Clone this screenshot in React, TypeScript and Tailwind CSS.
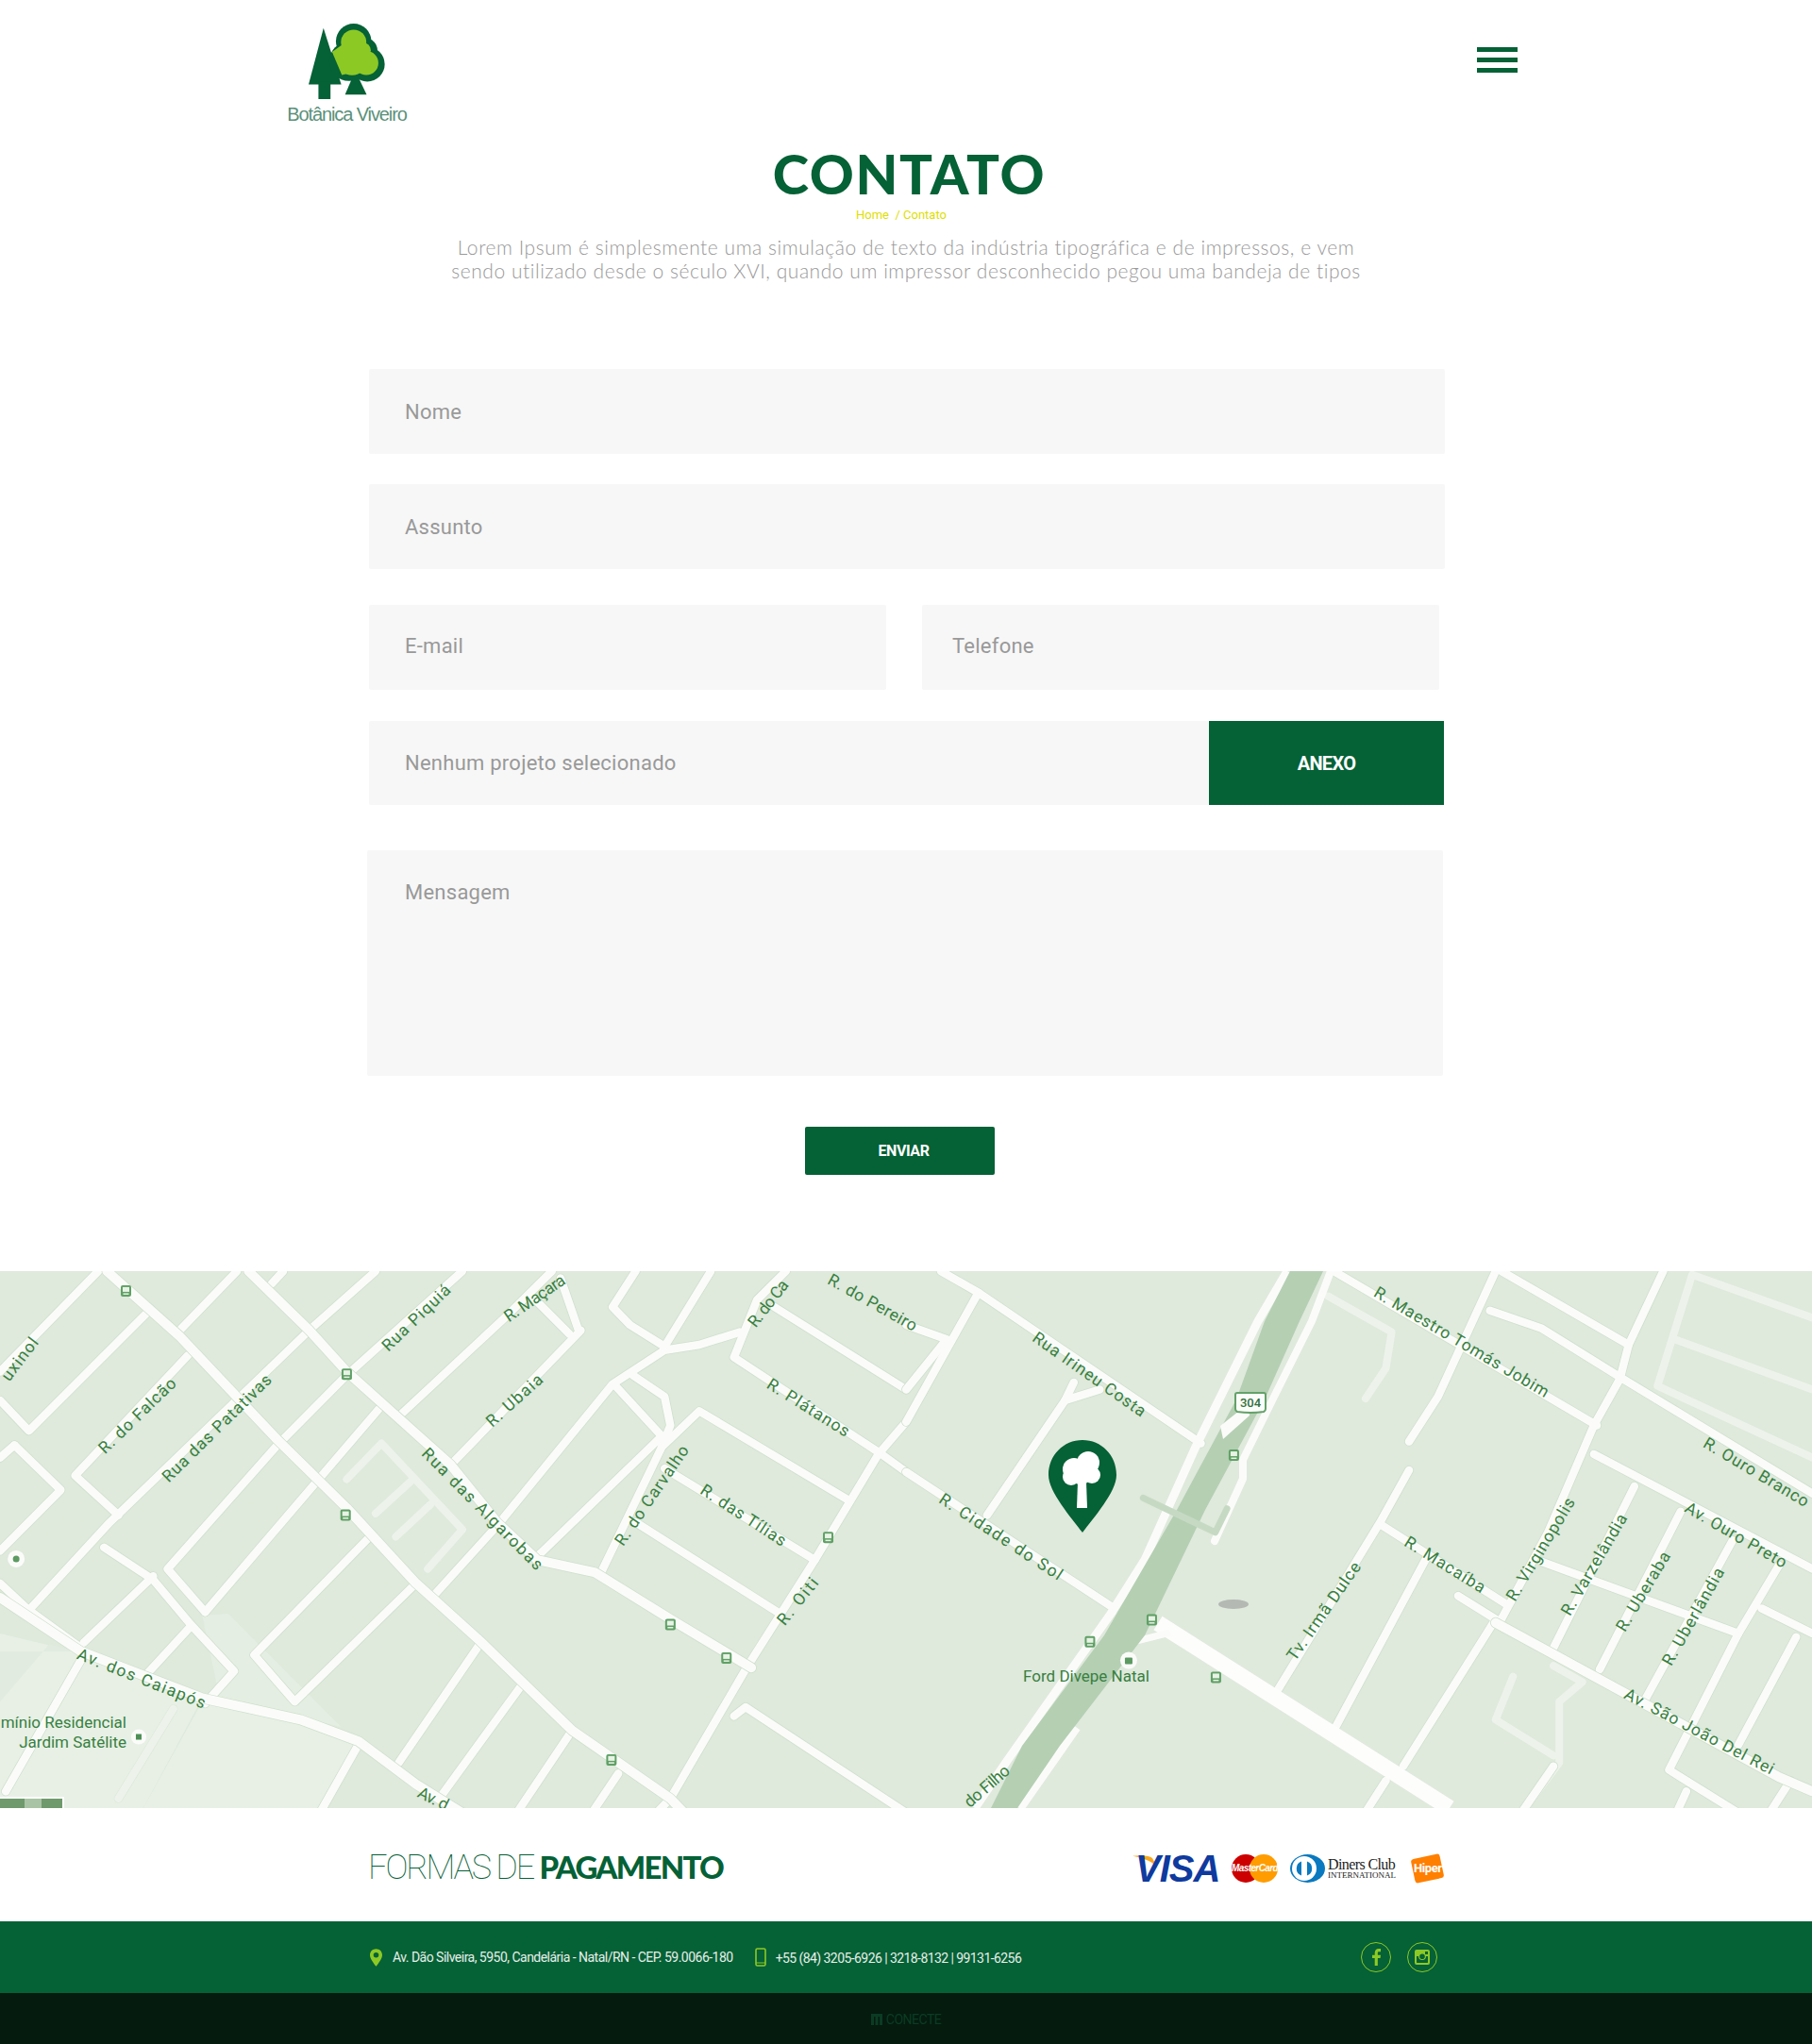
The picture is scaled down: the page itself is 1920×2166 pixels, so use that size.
import type { ReactNode } from "react"

type Pt = [number, number]

// map data is traced in a 1568x1550 working space per half, toMap brings it to real map pixels
const toMap = ([x, y]: Pt): Pt => [x / 1.633, y / 2.63 - 7.6]
const rightPath = (pts: Pt[]): Pt[] => pts.map(([x, y]) => [x + 1568, y])
const rightSide = (paths: Pt[][]): Pt[][] => paths.map(rightPath)

const minorLeft: Pt[][] = [
  [[170, 20], [0, 300]],
  [[0, 380], [50, 465], [255, 135]],
  [[205, 700], [130, 590], [325, 255]],
  [[25, 505], [105, 630], [0, 800]],
  [[25, 505], [0, 540]],
  [[50, 965], [190, 720], [535, 185], [650, 20]],
  [[305, 195], [410, 20]],
  [[470, 55], [490, 20]],
  [[145, 1055], [265, 870]],
  [[180, 790], [265, 880], [330, 1005], [405, 1135], [355, 1225]],
  [[355, 970], [290, 850], [480, 505], [600, 310], [800, 20]],
  [[355, 970], [655, 405]],
  [[690, 425], [880, 140], [955, 20]],
  [[640, 760], [440, 1090], [510, 1220], [720, 890]],
  [[750, 925], [860, 730], [1060, 335], [1150, 240], [1210, 225], [1280, 190]],
  [[780, 560], [1005, 185]],
  [[920, 90], [985, 195]],
  [[970, 40], [1000, 180]],
  [[1100, 20], [1060, 120], [1090, 170], [1150, 230]],
  [[1230, 20], [1150, 230]],
  [[930, 815], [1145, 480]],
  [[1065, 340], [1145, 480]],
  [[1095, 310], [1150, 370], [1160, 450], [1145, 510], [1040, 860]],
  [[1145, 510], [1210, 410], [1470, 660]],
  [[1150, 570], [1410, 825]],
  [[1100, 720], [1350, 975]],
  [[1360, 20], [1310, 100], [1270, 260], [1525, 530], [1568, 580]],
  [[1340, 120], [1568, 350]],
  [[1568, 440], [1520, 530], [1410, 825], [1290, 1130], [1160, 1490], [1130, 1540]],
  [[1270, 1260], [1290, 1235], [1568, 1530]],
  [[830, 1060], [690, 1390]],
  [[900, 1180], [760, 1490]],
  [[990, 1300], [890, 1540]],
  [[1070, 1420], [1020, 1540]],
  [[620, 1340], [550, 1540]],
  [[330, 1010], [250, 1150]],
  [[145, 1090], [10, 1470]],
  [[0, 890], [50, 965], [140, 1070]],
]

const mainLeft: Pt[][] = [
  [[185, 20], [310, 200], [480, 490], [600, 680], [720, 890], [830, 1050], [990, 1300], [1160, 1490], [1190, 1540]],
  [[430, 20], [535, 185], [600, 300], [690, 430], [780, 560], [860, 720], [930, 825], [1030, 860], [1160, 990], [1300, 1125]],
  [[0, 930], [140, 1080], [350, 1210], [520, 1270], [620, 1330], [720, 1450], [810, 1540]],
]

const faintLeft: Pt[][] = [
  [[600, 600], [660, 500], [800, 740], [740, 850]],
  [[650, 695], [715, 600]],
  [[685, 760], [745, 670]],
  [[300, 1240], [205, 1490]],
]

const minorRight: Pt[][] = rightSide([
  [[60, 20], [125, 80], [510, 500]],
  [[125, 80], [0, 440]],
  [[0, 350], [70, 210], [0, 170]],
  [[0, 580], [360, 960]],
  [[335, 350], [275, 380], [140, 700]],
  [[290, 330], [275, 380]],
  [[740, 20], [1195, 450]],
  [[1030, 20], [1250, 225]],
  [[1310, 20], [1250, 225], [1235, 320], [1190, 450], [1110, 750], [1030, 990]],
  [[1010, 130], [1100, 180], [1240, 320], [1568, 640]],
  [[1020, 20], [920, 370], [870, 495]],
  [[870, 575], [820, 720], [640, 1195]],
  [[820, 725], [1040, 950]],
  [[900, 820], [740, 1300]],
  [[955, 925], [1020, 990], [860, 1400]],
  [[1190, 530], [1568, 850]],
  [[1260, 620], [1120, 1070]],
  [[1340, 690], [1200, 1130]],
  [[1430, 770], [1280, 1210]],
  [[1510, 840], [1440, 1030], [1320, 1410], [1450, 1540]],
  [[1480, 960], [1568, 1030]],
  [[1100, 830], [1440, 1030]],
  [[1540, 1040], [1440, 1340]],
  [[1530, 1440], [1490, 1540]],
  [[1350, 1470], [1330, 1540]],
  [[830, 1440], [790, 1540]],
  [[1120, 1400], [1060, 1540]],
])

const mainRight: Pt[][] = rightSide([
  [[1020, 1000], [1510, 1430], [1568, 1470]],
])

const faintRight: Pt[][] = rightSide([
  [[730, 90], [840, 190], [830, 290], [795, 375]],
  [[1568, 150], [1360, 30], [1300, 340], [1568, 540]],
  [[1330, 210], [1568, 350]],
  [[1050, 1150], [1020, 1270], [1120, 1370]],
  [[1120, 1120], [1170, 1165], [1130, 1220], [1130, 1390], [1060, 1540]],
])

const labels: { text: string; from: Pt; to: Pt }[] = [
  { text: "uxinol", from: [8, 320], to: [60, 210] },
  { text: "R. do Falcão", from: [175, 520], to: [300, 325] },
  { text: "Rua das Patativas", from: [285, 600], to: [465, 315] },
  { text: "Rua Piquiá", from: [665, 235], to: [775, 65] },
  { text: "R. Maçara", from: [875, 150], to: [975, 40] },
  { text: "R. Ubaia", from: [845, 445], to: [935, 315] },
  { text: "R. do Ca", from: [1300, 170], to: [1358, 50] },
  { text: "R. do Pereiro", from: [1435, 40], to: [1585, 175] },
  { text: "R. Plátanos", from: [1330, 330], to: [1468, 470] },
  { text: "Rua das Algarobas", from: [735, 520], to: [935, 845] },
  { text: "R. do Carvalho", from: [1070, 780], to: [1185, 510] },
  { text: "R. das Tílias", from: [1215, 625], to: [1358, 775] },
  { text: "R. Oiti", from: [1350, 1000], to: [1410, 880] },
  { text: "Av. dos Caiapós", from: [135, 1085], to: [355, 1225] },
  { text: "Av. d", from: [725, 1470], to: [775, 1510] },
  { text: "Rua Irineu Costa", from: [1790, 200], to: [1980, 415] },
  { text: "R. Cidade do Sol", from: [1628, 650], to: [1836, 870] },
  { text: "R. Maestro Tomás Jobim", from: [2380, 75], to: [2678, 360] },
  { text: "R. Ouro Branco", from: [2950, 495], to: [3128, 665] },
  { text: "Av. Ouro Preto", from: [2918, 675], to: [3090, 835] },
  { text: "R. Macaíba", from: [2433, 770], to: [2568, 905] },
  { text: "R. Virginopolis", from: [2613, 935], to: [2718, 655] },
  { text: "R. Varzelândia", from: [2708, 975], to: [2808, 700] },
  { text: "R. Uberaba", from: [2803, 1020], to: [2883, 805] },
  { text: "R. Uberlândia", from: [2883, 1115], to: [2976, 850] },
  { text: "Tv. Irmã Dulce", from: [2233, 1100], to: [2348, 835] },
  { text: "Av. São João Del Rei", from: [2813, 1195], to: [3068, 1410] },
  { text: "do Filho", from: [1672, 1505], to: [1743, 1405] },
]

const busStops: Pt[] = [
  [218, 75], [600, 307], [598, 700], [1160, 1005], [1257, 1098], [1058, 1382], [1433, 762],
  [2135, 533], [1993, 992], [1886, 1053], [2104, 1152],
]

function line(pts: Pt[]) {
  return pts.map(toMap).map(([x, y]) => `${x.toFixed(1)},${y.toFixed(1)}`).join(" ")
}

function Roads({ items, width, casing, color }: { items: Pt[][]; width: number; casing: string; color: string }) {
  return (
    <>
      {items.map((pts, i) => (
        <polyline key={`c${i}`} points={line(pts)} fill="none" stroke={casing} strokeWidth={width + 1.5} strokeLinejoin="round" strokeLinecap="round" />
      ))}
      {items.map((pts, i) => (
        <polyline key={`r${i}`} points={line(pts)} fill="none" stroke={color} strokeWidth={width} strokeLinejoin="round" strokeLinecap="round" />
      ))}
    </>
  )
}

function MapLabel({ text, from, to }: { text: string; from: Pt; to: Pt }) {
  const [x1, y1] = toMap(from)
  const [x2, y2] = toMap(to)
  const angle = (Math.atan2(y2 - y1, x2 - x1) * 180) / Math.PI
  const length = Math.hypot(x2 - x1, y2 - y1)
  return (
    <text
      transform={`translate(${(x1 + x2) / 2} ${(y1 + y2) / 2}) rotate(${angle})`}
      textAnchor="middle"
      dominantBaseline="central"
      fontSize="17.5"
      textLength={length}
      lengthAdjust="spacing"
      fill="#37803f"
      style={{ fontFamily: "Roboto, sans-serif" }}
    >
      {text}
    </text>
  )
}

function MapArt() {
  const [poiX, poiY] = toMap([1953, 1105])
  const [poi2X, poi2Y] = toMap([240, 1318])
  const [poi3X, poi3Y] = toMap([28, 822])
  return (
    <svg viewBox="0 0 1920 569" className="block w-full h-[569px] bg-[#dfe9dc]">
      <polygon points={line([[0, 1030], [130, 1080], [350, 1210], [240, 1540], [0, 1540]])} fill="#e8f0e6" />
      <polygon points={line([[350, 1220], [520, 1270], [620, 1340], [550, 1540], [240, 1540]])} fill="#e8f0e6" />
      <polygon points={line([[350, 980], [395, 975], [590, 1290], [380, 1210]])} fill="#e5eee2" />
      <polygon points={line([[130, 1080], [85, 1060], [0, 1220], [0, 1080]])} fill="#e2ebdf" />

      <Roads items={faintLeft} width={8} casing="#dfe9dc" color="#edf3eb" />
      <Roads items={faintRight} width={8} casing="#dfe9dc" color="#edf3eb" />
      <Roads items={minorLeft} width={8.5} casing="#cfe0cc" color="#fbfcfa" />
      <Roads items={minorRight} width={8.5} casing="#cfe0cc" color="#fbfcfa" />
      <Roads items={mainLeft} width={10} casing="#cfe0cc" color="#fbfcfa" />
      <Roads items={mainRight} width={10} casing="#cfe0cc" color="#fbfcfa" />

      {/* service roads and avenue around the BR-304, traced directly in map pixels */}
      <polyline points="1364,0 1333,53 1267,186 1213,306 1177,363 1067,519 1033,569" fill="none" stroke="#fbfcfa" strokeWidth="9" strokeLinejoin="round" />
      <polyline points="1410,0 1390,53 1350,133 1317,200 1317,220 1287,286" fill="none" stroke="#fbfcfa" strokeWidth="8" strokeLinejoin="round" strokeLinecap="round" />
      <polyline points="1140,483 1080,569" fill="none" stroke="#fbfcfa" strokeWidth="11" />
      <polyline points="1227,373 1536,569" fill="none" stroke="#fdfdfc" strokeWidth="17" />
      <polyline points="1240,383 1200,393 1192,405" fill="none" stroke="#fbfcfa" strokeWidth="7" strokeLinejoin="round" />

      {/* BR-304 */}
      <polygon points="1367,0 1340,53 1310,136 1247,253 1170,386 1083,503 1050,569 1078,569 1123,503 1213,386 1277,253 1340,136 1377,53 1402,0" fill="#b5cfb3" />

      {/* overpass */}
      <polyline points={line(rightPath([[410, 652], [535, 748], [555, 682]]))} fill="none" stroke="#c6dac3" strokeWidth="7" strokeLinecap="round" strokeLinejoin="round" />

      {/* ramp next to the highway */}
      <polygon points="1296,178 1324,153 1322,141 1293,164" fill="#fbfcfa" />

      {labels.map((l) => (
        <MapLabel key={l.text} {...l} />
      ))}

      <text x="134" y="484" textAnchor="end" fontSize="17" fill="#37803f" style={{ fontFamily: "Roboto, sans-serif" }}>mínio Residencial</text>
      <text x="134" y="505" textAnchor="end" fontSize="17" fill="#37803f" style={{ fontFamily: "Roboto, sans-serif" }}>Jardim Satélite</text>
      <text x="1151" y="435" textAnchor="middle" fontSize="17" fill="#37803f" style={{ fontFamily: "Roboto, sans-serif" }}>Ford Divepe Natal</text>

      {busStops.map((pt) => {
        const [x, y] = toMap(pt)
        return (
          <g key={pt.join()} transform={`translate(${x} ${y})`}>
            <rect x="-5.5" y="-6" width="11" height="12" rx="2" fill="#5fa065" />
            <rect x="-3.5" y="-4" width="7" height="5" fill="#e8f2e5" />
            <rect x="-3" y="2.5" width="6" height="1.5" fill="#e8f2e5" />
          </g>
        )
      })}

      {/* shield */}
      <path d="M1311 129 h28 a2 2 0 0 1 2 2 v15 q0 2 -2 3 q-14 2 -28 0 q-2 -1 -2 -3 v-15 a2 2 0 0 1 2 -2z" fill="#fbfdfa" stroke="#63a168" strokeWidth="2" />
      <text x="1325" y="144" textAnchor="middle" fontSize="13" fontWeight="500" fill="#32703c" style={{ fontFamily: "Roboto, sans-serif" }}>304</text>

      <circle cx={poiX} cy={poiY} r="9" fill="#fbfcfa" />
      <rect x={poiX - 4} y={poiY - 3} width="8" height="7" rx="1" fill="#5c9a62" />
      <circle cx={poi2X} cy={poi2Y} r="8" fill="#fbfcfa" />
      <rect x={poi2X - 3} y={poi2Y - 3} width="6" height="6" fill="#4d8f55" />
      <circle cx={poi3X} cy={poi3Y} r="9" fill="#fbfcfa" />
      <circle cx={poi3X} cy={poi3Y} r="3.5" fill="#5c9a62" />

      {/* marker shadow */}
      <ellipse cx="1307" cy="353" rx="16" ry="5" fill="#a9aca9" opacity="0.8" />

      {/* pin */}
      <g transform="translate(1111 179)">
        <path d="M36 0C16 0 0 16 0 37C0 55 24 82 36 98C48 82 72 55 72 37C72 16 56 0 36 0Z" fill="#056136" />
        <g fill="#fff">
          <circle cx="42" cy="24" r="12" />
          <circle cx="27" cy="31" r="12" />
          <circle cx="24" cy="39" r="9" />
          <circle cx="46" cy="37" r="9" />
          <circle cx="34" cy="34" r="13" />
          <path d="M31 44h9l1 28H30z" />
        </g>
      </g>

      {/* satellite thumbnail corner */}
      <rect x="0" y="557" width="68" height="12" fill="#fff" />
      <rect x="0" y="559" width="66" height="10" fill="#6f9a6c" />
      <rect x="26" y="559" width="18" height="10" fill="#a9c4a4" />
    </svg>
  )
}

function Field({ children, className }: { children: ReactNode; className: string }) {
  return (
    <div className={`flex items-center bg-[#f7f7f7] rounded-[2px] text-[22px] tracking-[0.25px] text-[#999] ${className}`}>
      {children}
    </div>
  )
}

function Logo() {
  return (
    <div className="flex flex-col items-center w-[125px]">
      <svg viewBox="140 70 250 250" className="w-[84px] h-[84px]">
        <polygon points="190,90 246,268 143,268" fill="#056136" />
        <rect x="174" y="260" width="38" height="54" fill="#056136" />
        <polygon points="290,225 326,300 258,300" fill="#056136" />
        <g fill="#056136">
          <circle cx="285" cy="132" r="56" />
          <circle cx="322" cy="160" r="38" />
          <circle cx="328" cy="204" r="55" />
          <circle cx="270" cy="195" r="62" />
        </g>
        <g fill="#8dc925">
          <circle cx="285" cy="135" r="40" />
          <circle cx="315" cy="160" r="24" />
          <circle cx="325" cy="200" r="38" />
          <circle cx="280" cy="195" r="44" />
          <polygon points="217,165 260,135 280,230 248,238" />
        </g>
      </svg>
      <span className="mt-[3px] text-[20px] leading-[22px] tracking-[-1.1px] whitespace-nowrap text-[#5b917a] font-['Liberation_Sans',sans-serif]">
        Botânica Viveiro
      </span>
    </div>
  )
}

function Payments() {
  return (
    <div className="flex items-center mt-[8px]">
      <div className="relative w-[91px] h-[30px]">
        <svg viewBox="0 0 40 20" className="absolute left-0 top-0 w-[30px] h-[17px]">
          <path d="M0 1 Q22 -1 28 4 L36 19 Q28 6 0 1Z" fill="#f7a823" />
        </svg>
        <span className="absolute left-[3px] top-0 text-[40px] leading-[30px] font-bold italic tracking-[-1px] text-[#0f3a9e] font-['Liberation_Sans',sans-serif]">
          VISA
        </span>
      </div>
      <div className="relative ml-[14px] w-[49px] h-[30px]">
        <div className="absolute left-0 top-0 w-[30px] h-[30px] rounded-full bg-[#cc0000]" />
        <div className="absolute right-0 top-0 w-[30px] h-[30px] rounded-full bg-[#ff9c00]" />
        <span className="absolute left-0 top-[8px] text-[10px] leading-[13px] font-bold italic tracking-[-0.6px] text-white font-['Liberation_Sans',sans-serif]">
          MasterCard
        </span>
      </div>
      <svg viewBox="0 0 37 30" className="ml-[13px] w-[37px] h-[30px]">
        <ellipse cx="18.5" cy="15" rx="18.5" ry="15" fill="#0a79bf" />
        <circle cx="15" cy="15" r="13" fill="#fff" />
        <path d="M12 7.5a8 8 0 0 0 0 15z" fill="#0a79bf" />
        <path d="M18 7.5a8 8 0 0 1 0 15z" fill="#0a79bf" />
      </svg>
      <div className="ml-[3px] flex flex-col w-[72px] text-[#222] font-['Liberation_Serif',serif]">
        <span className="text-[16px] leading-[15px] tracking-[-0.6px] whitespace-nowrap">Diners Club</span>
        <span className="text-[9px] leading-[9px] whitespace-nowrap">INTERNATIONAL</span>
      </div>
      <div className="ml-[15px] w-[36px] h-[30px] flex items-center justify-center">
        <div className="w-[31px] h-[26px] rotate-[-12deg] rounded-[3px] bg-[#ff7f00] flex items-center justify-center">
          <span className="rotate-[12deg] text-[13px] font-bold tracking-[-0.4px] text-white font-['Roboto',sans-serif]">Hiper</span>
        </div>
      </div>
    </div>
  )
}

export default function App() {
  return (
    <div className="w-[1920px] bg-white font-['Roboto',sans-serif]">
      <header className="flex justify-between h-[150px] pt-[23px] pl-[305px] pr-[312px]">
        <Logo />
        <div className="flex flex-col gap-[6px] w-[43px] mt-[27px]">
          <span className="h-[5px] bg-[#056136]" />
          <span className="h-[5px] bg-[#056136]" />
          <span className="h-[5px] bg-[#056136]" />
        </div>
      </header>

      <section className="flex flex-col items-center">
        <h1 className="ml-[7px] text-[58px] leading-[68px] font-black tracking-[1.7px] text-[#056136] font-['Lato',sans-serif]">
          CONTATO
        </h1>
        <p className="mr-[10px] text-[13px] leading-[20px] text-[#dede00] whitespace-pre">Home  / Contato</p>
        <p className="mt-[11px] text-center text-[21px] leading-[25px] font-light tracking-[0.55px] text-[#999] font-['Lato',sans-serif]">
          Lorem Ipsum é simplesmente uma simulação de texto da indústria tipográfica e de impressos, e vem
          <br />
          sendo utilizado desde o século XVI, quando um impressor desconhecido pegou uma bandeja de tipos
        </p>
      </section>

      <form className="mt-[92px] ml-[391px] w-[1140px]">
        <Field className="h-[90px] pl-[38px]">Nome</Field>
        <Field className="mt-[32px] h-[90px] pl-[38px]">Assunto</Field>
        <div className="mt-[38px] flex gap-[38px]">
          <Field className="w-[548px] h-[90px] pl-[38px] pb-[3px]">E-mail</Field>
          <Field className="w-[548px] h-[90px] pl-[32px] pb-[3px]">Telefone</Field>
        </div>
        <div className="mt-[33px] flex h-[89px] w-[1139px]">
          <Field className="flex-1 pl-[38px]">Nenhum projeto selecionado</Field>
          <button type="button" className="w-[249px] bg-[#056136] text-[20px] font-bold tracking-[-0.7px] text-white">
            ANEXO
          </button>
        </div>
        <div className="mt-[48px] ml-[-2px] w-[1140px] h-[239px] rounded-[2px] bg-[#f7f7f7] pt-[31px] pl-[40px] text-[22px] leading-[28px] tracking-[0.25px] text-[#999]">
          Mensagem
        </div>
        <button type="button" className="block mt-[54px] ml-[462px] w-[201px] h-[51px] pl-[8px] rounded-[2px] bg-[#056136] text-[16px] font-bold tracking-[-0.4px] text-white">
          ENVIAR
        </button>
      </form>

      <div className="mt-[102px]">
        <MapArt />
      </div>

      <div className="flex items-center justify-between h-[120px] pl-[390px] pr-[390px]">
        <h2 className="mt-[4px] text-[36px] leading-[40px] tracking-[-2.2px] text-[#056136] whitespace-nowrap font-thin">
          FORMAS DE <span className="text-[33px] font-black tracking-[-1.7px] font-['Lato',sans-serif]">PAGAMENTO</span>
        </h2>
        <Payments />
      </div>

      <footer className="flex items-center h-[76px] bg-[#056136] pl-[392px] pr-[397px] text-[14px] tracking-[-0.52px] text-[#e6efe9]">
        <svg viewBox="0 0 14 20" className="w-[13px] h-[19px]">
          <path fillRule="evenodd" d="M7 0C3 0 0 3 0 7c0 4 4 9 7 13 3-4 7-9 7-13 0-4-3-7-7-7zm0 4a3 3 0 1 1 0 6 3 3 0 0 1 0-6z" fill="#8dc925" />
        </svg>
        <span className="ml-[11px] whitespace-nowrap">Av. Dão Silveira, 5950, Candelária - Natal/RN - CEP. 59.0066-180</span>
        <svg viewBox="0 0 12 20" className="ml-[23px] w-[12px] h-[20px]" fill="none">
          <rect x="1" y="1" width="10" height="18" rx="1.5" stroke="#8dc925" strokeWidth="1.6" />
          <path d="M1 16h10" stroke="#8dc925" strokeWidth="1" />
        </svg>
        <span className="ml-[10px] mt-[2px] whitespace-nowrap tracking-[-0.57px]">+55 (84) 3205-6926 | 3218-8132 | 99131-6256</span>
        <div className="ml-auto flex gap-[17px]">
          <span className="flex items-center justify-center w-[32px] h-[32px] rounded-full border border-[#8dc925]">
            <svg viewBox="0 0 10 20" className="w-[9px] h-[18px]">
              <path d="M3 20V11H0V7.5h3V5c0-3 1.700-5 4.500-5H10v3.500H8c-1 0-1.500.5-1.500 1.500v2.500H10L9.500 11h-3v9z" fill="#8dc925" />
            </svg>
          </span>
          <span className="flex items-center justify-center w-[32px] h-[32px] rounded-full border border-[#8dc925]">
            <svg viewBox="0 0 16 16" className="w-[16px] h-[16px]">
              <path fillRule="evenodd" d="M2 0h12a2 2 0 0 1 2 2v12a2 2 0 0 1-2 2H2a2 2 0 0 1-2-2V2a2 2 0 0 1 2-2zm0 7v6.500c0 .3.200.5.5.5h11c.3 0 .5-.2.5-.5V7h-2a4 4 0 1 1-8 0zm6-2.500a2.800 2.800 0 1 0 0 5.600 2.800 2.800 0 0 0 0-5.600zM11 2v3h3V2z" fill="#8dc925" />
            </svg>
          </span>
        </div>
      </footer>

      <div className="flex items-center justify-center gap-[4px] h-[54px] pt-[2px] bg-[#041b0e] text-[14px] tracking-[-0.5px] text-[#0b3c23]">
        <svg viewBox="0 0 12 12" className="w-[12px] h-[12px]">
          <path d="M0 0h12v12H9V3H7.500v9h-3V3H3v9H0z" fill="#0b3c23" />
        </svg>
        <span>CONECTE</span>
      </div>
    </div>
  )
}
